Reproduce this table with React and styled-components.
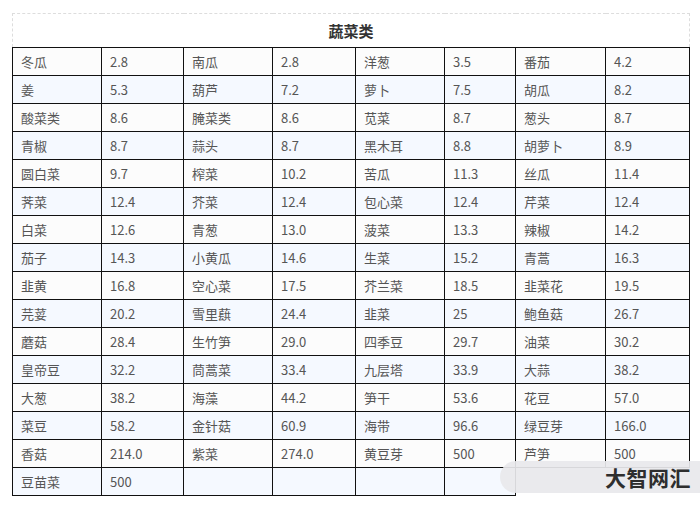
import React from 'react'
import styled, { createGlobalStyle } from 'styled-components'

const GlobalStyle = createGlobalStyle`
  body {
    margin: 0;
    background: #fff;
    font-family: "Noto Sans CJK SC", "Noto Sans", sans-serif;
  }
`

const rows = [
  ['冬瓜', '2.8', '南瓜', '2.8', '洋葱', '3.5', '番茄', '4.2'],
  ['姜', '5.3', '葫芦', '7.2', '萝卜', '7.5', '胡瓜', '8.2'],
  ['酸菜类', '8.6', '腌菜类', '8.6', '苋菜', '8.7', '葱头', '8.7'],
  ['青椒', '8.7', '蒜头', '8.7', '黑木耳', '8.8', '胡萝卜', '8.9'],
  ['圆白菜', '9.7', '榨菜', '10.2', '苦瓜', '11.3', '丝瓜', '11.4'],
  ['荠菜', '12.4', '芥菜', '12.4', '包心菜', '12.4', '芹菜', '12.4'],
  ['白菜', '12.6', '青葱', '13.0', '菠菜', '13.3', '辣椒', '14.2'],
  ['茄子', '14.3', '小黄瓜', '14.6', '生菜', '15.2', '青蒿', '16.3'],
  ['韭黄', '16.8', '空心菜', '17.5', '芥兰菜', '18.5', '韭菜花', '19.5'],
  ['芫荽', '20.2', '雪里蕻', '24.4', '韭菜', '25', '鲍鱼菇', '26.7'],
  ['蘑菇', '28.4', '生竹笋', '29.0', '四季豆', '29.7', '油菜', '30.2'],
  ['皇帝豆', '32.2', '茼蒿菜', '33.4', '九层塔', '33.9', '大蒜', '38.2'],
  ['大葱', '38.2', '海藻', '44.2', '笋干', '53.6', '花豆', '57.0'],
  ['菜豆', '58.2', '金针菇', '60.9', '海带', '96.6', '绿豆芽', '166.0'],
  ['香菇', '214.0', '紫菜', '274.0', '黄豆芽', '500', '芦笋', '500'],
  ['豆苗菜', '500', '', '', '', ''],
]

const widths = [89, 82, 89, 83, 89, 71, 90, 84]

const Page = styled.div`
  position: relative;
  width: 700px;
  height: 509px;
  overflow: hidden;
  padding: 13px 0 0 12px;
  box-sizing: border-box;
`

const Table = styled.table`
  border-collapse: collapse;
  table-layout: fixed;
  width: 678px;
  font-size: 13px;
  color: #555;
`

const TitleCell = styled.th`
  height: 33px;
  padding: 0;
  border: 1px dashed #ddd;
  border-bottom: 1px solid #111;
  background: #fff;
  color: #333;
  font-size: 15px;
  font-weight: bold;
  text-align: center;
`

const Row = styled.tr`
  background: ${({ $alt }) => ($alt ? '#f5f9ff' : '#fcfcfc')};
`

const Cell = styled.td`
  height: 27px;
  padding: 0 0 0 8px;
  border: 1px solid #111;
  white-space: nowrap;
  overflow: hidden;
  line-height: 27px;
`

const Watermark = styled.div`
  position: absolute;
  left: 500px;
  top: 461px;
  width: 210px;
  height: 32px;
  border-radius: 16px 0 0 16px;
  background: rgba(232, 232, 236, 0.92);
  display: flex;
  align-items: center;
  justify-content: flex-end;
  padding-right: 19px;
  box-sizing: border-box;
  font-size: 21px;
  font-weight: bold;
  color: #2e2e2e;
  letter-spacing: 0.5px;
`

const App = () => {
  return (
    <Page>
      <GlobalStyle />
      <Table>
        <colgroup>
          {widths.map((w, i) => (
            <col key={i} style={{ width: w }} />
          ))}
        </colgroup>
        <thead>
          <tr>
            <TitleCell colSpan={8}>蔬菜类</TitleCell>
          </tr>
        </thead>
        <tbody>
          {rows.map((r, i) => (
            <Row key={i} $alt={i % 2 === 1}>
              {r.map((c, j) => (
                <Cell key={j}>{c}</Cell>
              ))}
            </Row>
          ))}
        </tbody>
      </Table>
      <Watermark>大智网汇</Watermark>
    </Page>
  )
}

export default App
